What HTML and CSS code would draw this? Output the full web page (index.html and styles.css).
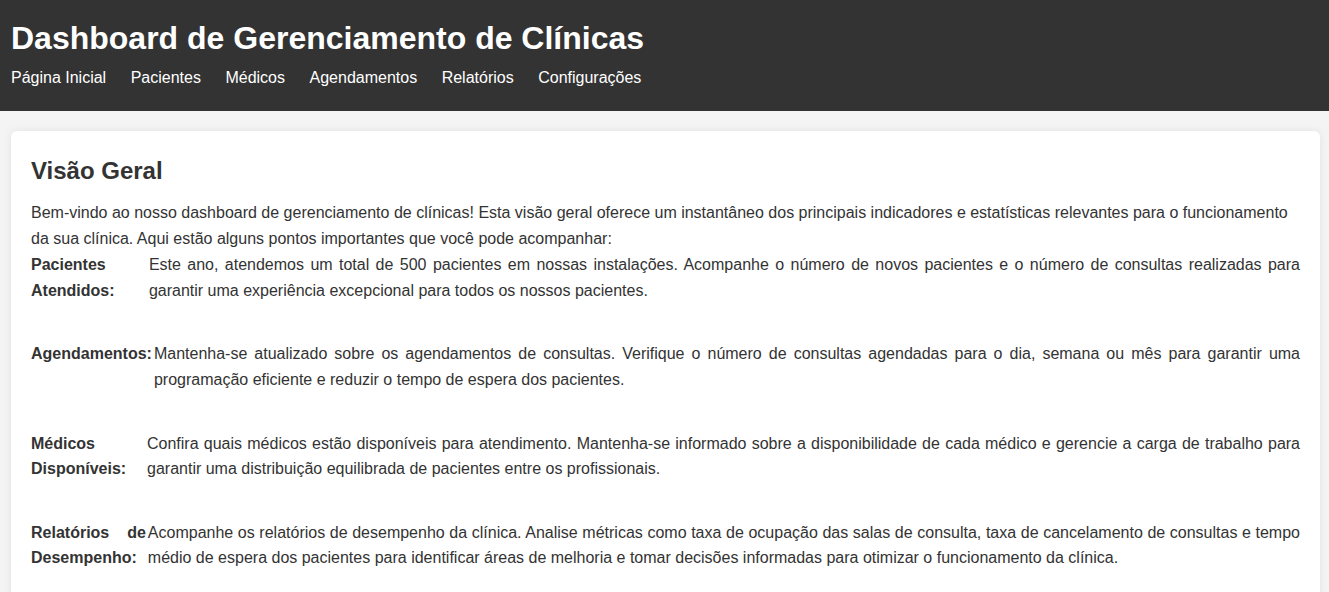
FILE: index.html
```html
<!DOCTYPE html>
<html lang="pt-BR">
<head>
<meta charset="utf-8">
<title>Dashboard de Gerenciamento de Clínicas</title>
<link rel="stylesheet" href="styles.css">
</head>
<body>
<header class="topbar">
  <h1 class="title">Dashboard de Gerenciamento de Clínicas</h1>
  <nav class="nav">
    <a href="#">Página Inicial</a>
    <a href="#">Pacientes</a>
    <a href="#">Médicos</a>
    <a href="#">Agendamentos</a>
    <a href="#">Relatórios</a>
    <a href="#">Configurações</a>
  </nav>
</header>
<main class="main">
  <section class="card">
    <h2 class="card-title">Visão Geral</h2>
    <p class="intro">Bem-vindo ao nosso dashboard de gerenciamento de clínicas! Esta visão geral oferece um instantâneo dos principais indicadores e estatísticas relevantes para o funcionamento da sua clínica. Aqui estão alguns pontos importantes que você pode acompanhar:</p>
    <ul class="items">
      <li class="item"><strong class="label">Pacientes Atendidos:</strong><p class="desc">Este ano, atendemos um total de 500 pacientes em nossas instalações. Acompanhe o número de novos pacientes e o número de consultas realizadas para garantir uma experiência excepcional para todos os nossos pacientes.</p></li>
      <li class="item"><strong class="label">Agendamentos:</strong><p class="desc">Mantenha-se atualizado sobre os agendamentos de consultas. Verifique o número de consultas agendadas para o dia, semana ou mês para garantir uma programação eficiente e reduzir o tempo de espera dos pacientes.</p></li>
      <li class="item"><strong class="label">Médicos Disponíveis:</strong><p class="desc">Confira quais médicos estão disponíveis para atendimento. Mantenha-se informado sobre a disponibilidade de cada médico e gerencie a carga de trabalho para garantir uma distribuição equilibrada de pacientes entre os profissionais.</p></li>
      <li class="item"><strong class="label">Relatórios de Desempenho:</strong><p class="desc">Acompanhe os relatórios de desempenho da clínica. Analise métricas como taxa de ocupação das salas de consulta, taxa de cancelamento de consultas e tempo médio de espera dos pacientes para identificar áreas de melhoria e tomar decisões informadas para otimizar o funcionamento da clínica.</p></li>
    </ul>
  </section>
</main>
</body>
</html>
```
FILE: styles.css
```css
* { box-sizing: border-box; }
body {
  margin: 0;
  font-family: "Liberation Sans", Arial, sans-serif;
  background: #f4f4f4;
  color: #333;
}
.topbar {
  background: #333;
  color: #fff;
  padding: 20px 11px 20px;
  height: 111px;
}
.title {
  margin: 0 0 12px;
  font-size: 32px;
  font-weight: bold;
  line-height: 37px;
}
.nav {
  display: flex;
  gap: 24.5px;
}
.nav a {
  color: #fff;
  text-decoration: none;
  font-size: 16px;
  line-height: 18px;
}
.main {
  padding: 20px 9px 20px 11px;
}
.card {
  background: #fff;
  border-radius: 6px;
  box-shadow: 0 0 8px rgba(0,0,0,0.08);
  padding: 20px;
}
.card-title {
  margin: 6px 0 15px;
  font-size: 24px;
  line-height: 28px;
}
.intro {
  margin: 0 0 1px;
  font-size: 16px;
  line-height: 25.6px;
}
.items {
  list-style: none;
  margin: 0;
  padding: 0;
}
.item {
  display: flex;
  gap: 2px;
  margin-bottom: 38px;
  text-align: justify;
  font-size: 16px;
  line-height: 25.6px;
}
.desc {
  margin: 0;
}
```
